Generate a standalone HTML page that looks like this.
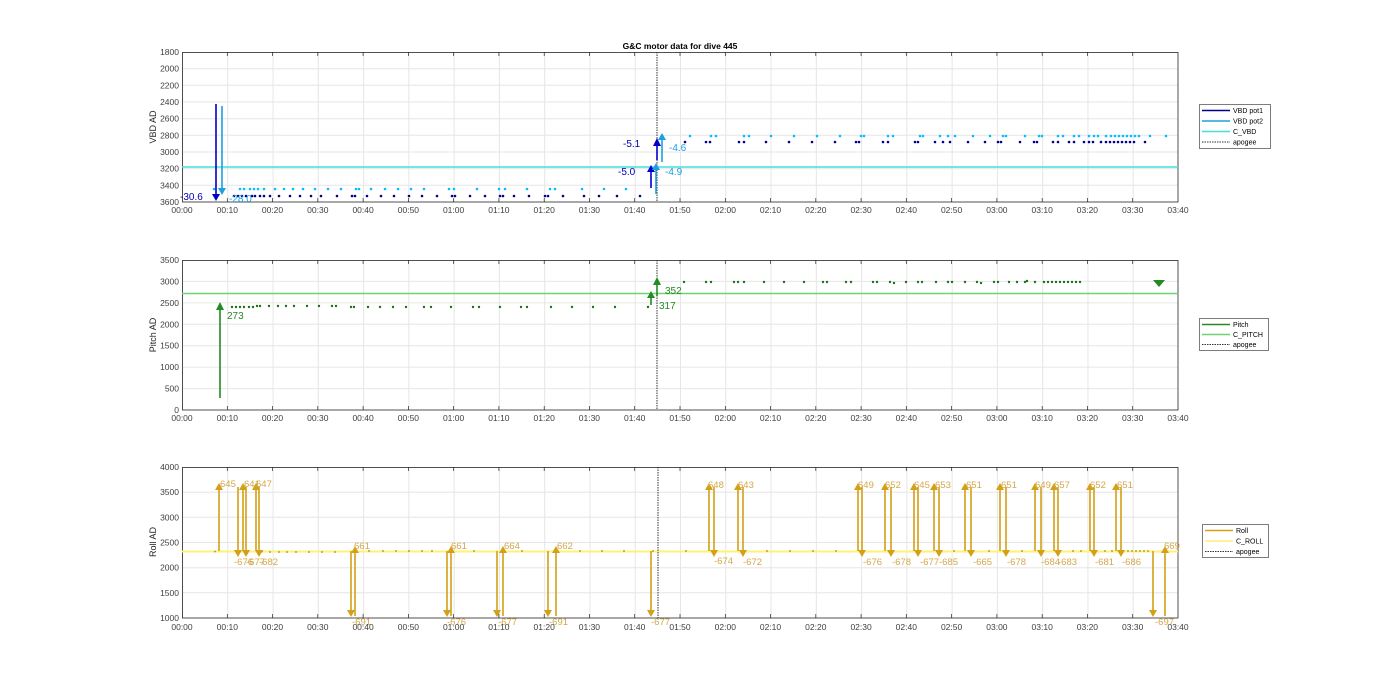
<!DOCTYPE html>
<html><head><meta charset="utf-8"><style>
html,body{margin:0;padding:0;background:#fff}
svg{display:block;font-family:"Liberation Sans",Arial,sans-serif}
.t{font-size:8.5px;fill:#404040}
</style></head><body>
<svg width="1400" height="693" viewBox="0 0 1400 693" xmlns="http://www.w3.org/2000/svg">
<defs>
<pattern id="gx" x="182" y="0" width="45.2727" height="693" patternUnits="userSpaceOnUse"><line x1="0.5" y1="0" x2="0.5" y2="693" stroke="#e6e6e6" stroke-width="1"/></pattern>
<marker id="ab" markerWidth="8" markerHeight="8" refX="4" refY="7" orient="auto"><path d="M0,0 L8,4 L0,8z" fill="#0000c0" transform="rotate(0)"/></marker>
</defs>

<!-- ============ PLOT 1 ============ -->
<rect x="182" y="52" width="996" height="150" fill="url(#gx)"/>
<g stroke="#e6e6e6"><line x1="182" x2="1178" y1="68.7" y2="68.7"/><line x1="182" x2="1178" y1="85.3" y2="85.3"/><line x1="182" x2="1178" y1="102" y2="102"/><line x1="182" x2="1178" y1="118.7" y2="118.7"/><line x1="182" x2="1178" y1="135.3" y2="135.3"/><line x1="182" x2="1178" y1="152" y2="152"/><line x1="182" x2="1178" y1="168.7" y2="168.7"/><line x1="182" x2="1178" y1="185.3" y2="185.3"/></g>
<rect x="182.5" y="52.5" width="995.5" height="149.5" fill="none" stroke="#262626" stroke-width="0.8"/>
<text x="680" y="49" text-anchor="middle" font-size="8.5" font-weight="bold" fill="#000">G&amp;C motor data for dive 445</text>
<g class="t" text-anchor="end"><text x="179" y="55">1800</text><text x="179" y="71.7">2000</text><text x="179" y="88.3">2200</text><text x="179" y="105">2400</text><text x="179" y="121.7">2600</text><text x="179" y="138.3">2800</text><text x="179" y="155">3000</text><text x="179" y="171.7">3200</text><text x="179" y="188.3">3400</text><text x="179" y="205">3600</text></g>
<text transform="translate(156,127) rotate(-90)" text-anchor="middle" font-size="9" fill="#262626">VBD AD</text>
<line x1="182" x2="1178" y1="167" y2="167" stroke="#40e0e0" stroke-width="1.6"/>
<line x1="657" x2="657" y1="52" y2="202" stroke="#333" stroke-dasharray="1.5,1" stroke-width="1"/>
<g fill="#00bfff">
<circle cx="214" cy="189" r="1.3"/><circle cx="240" cy="189" r="1.3"/><circle cx="244" cy="189" r="1.3"/><circle cx="250" cy="189" r="1.3"/><circle cx="254" cy="189" r="1.3"/><circle cx="258" cy="189" r="1.3"/><circle cx="264" cy="189" r="1.3"/><circle cx="275" cy="189" r="1.3"/><circle cx="284" cy="189" r="1.3"/><circle cx="293" cy="189" r="1.3"/><circle cx="303" cy="189" r="1.3"/><circle cx="315" cy="189" r="1.3"/><circle cx="328" cy="189" r="1.3"/><circle cx="341" cy="189" r="1.3"/><circle cx="356" cy="189" r="1.3"/><circle cx="359" cy="189" r="1.3"/><circle cx="371" cy="189" r="1.3"/><circle cx="385" cy="189" r="1.3"/><circle cx="398" cy="189" r="1.3"/><circle cx="411" cy="189" r="1.3"/><circle cx="424" cy="189" r="1.3"/><circle cx="449" cy="189" r="1.3"/><circle cx="454" cy="189" r="1.3"/><circle cx="477" cy="189" r="1.3"/><circle cx="499" cy="189" r="1.3"/><circle cx="505" cy="189" r="1.3"/><circle cx="527" cy="189" r="1.3"/><circle cx="550" cy="189" r="1.3"/><circle cx="555" cy="189" r="1.3"/><circle cx="582" cy="189" r="1.3"/><circle cx="604" cy="189" r="1.3"/><circle cx="626" cy="189" r="1.3"/>
<circle cx="690" cy="136" r="1.3"/><circle cx="711" cy="136" r="1.3"/><circle cx="716" cy="136" r="1.3"/><circle cx="744" cy="136" r="1.3"/><circle cx="749" cy="136" r="1.3"/><circle cx="771" cy="136" r="1.3"/><circle cx="794" cy="136" r="1.3"/><circle cx="817" cy="136" r="1.3"/><circle cx="840" cy="136" r="1.3"/><circle cx="861" cy="136" r="1.3"/><circle cx="864" cy="136" r="1.3"/><circle cx="888" cy="136" r="1.3"/><circle cx="893" cy="136" r="1.3"/><circle cx="920" cy="136" r="1.3"/><circle cx="923" cy="136" r="1.3"/><circle cx="940" cy="136" r="1.3"/><circle cx="948" cy="136" r="1.3"/><circle cx="955" cy="136" r="1.3"/><circle cx="973" cy="136" r="1.3"/><circle cx="990" cy="136" r="1.3"/><circle cx="1003" cy="136" r="1.3"/><circle cx="1006" cy="136" r="1.3"/><circle cx="1025" cy="136" r="1.3"/><circle cx="1039" cy="136" r="1.3"/><circle cx="1042" cy="136" r="1.3"/><circle cx="1058" cy="136" r="1.3"/><circle cx="1063" cy="136" r="1.3"/><circle cx="1074" cy="136" r="1.3"/><circle cx="1079" cy="136" r="1.3"/><circle cx="1089" cy="136" r="1.3"/><circle cx="1094" cy="136" r="1.3"/><circle cx="1098" cy="136" r="1.3"/><circle cx="1106" cy="136" r="1.3"/><circle cx="1111" cy="136" r="1.3"/><circle cx="1115" cy="136" r="1.3"/><circle cx="1119" cy="136" r="1.3"/><circle cx="1123" cy="136" r="1.3"/><circle cx="1127" cy="136" r="1.3"/><circle cx="1131" cy="136" r="1.3"/><circle cx="1135" cy="136" r="1.3"/><circle cx="1139" cy="136" r="1.3"/><circle cx="1150" cy="136" r="1.3"/><circle cx="1166" cy="136" r="1.3"/>
</g>
<g fill="#00008b">
<circle cx="234" cy="196" r="1.3"/><circle cx="238" cy="196" r="1.3"/><circle cx="242" cy="196" r="1.3"/><circle cx="246" cy="196" r="1.3"/><circle cx="252" cy="196" r="1.3"/><circle cx="255" cy="196" r="1.3"/><circle cx="260" cy="196" r="1.3"/><circle cx="264" cy="196" r="1.3"/><circle cx="270" cy="196" r="1.3"/><circle cx="279" cy="196" r="1.3"/><circle cx="290" cy="196" r="1.3"/><circle cx="300" cy="196" r="1.3"/><circle cx="311" cy="196" r="1.3"/><circle cx="321" cy="196" r="1.3"/><circle cx="337" cy="196" r="1.3"/><circle cx="352" cy="196" r="1.3"/><circle cx="355" cy="196" r="1.3"/><circle cx="367" cy="196" r="1.3"/><circle cx="381" cy="196" r="1.3"/><circle cx="394" cy="196" r="1.3"/><circle cx="409" cy="196" r="1.3"/><circle cx="422" cy="196" r="1.3"/><circle cx="437" cy="196" r="1.3"/><circle cx="452" cy="196" r="1.3"/><circle cx="455" cy="196" r="1.3"/><circle cx="470" cy="196" r="1.3"/><circle cx="485" cy="196" r="1.3"/><circle cx="500" cy="196" r="1.3"/><circle cx="503" cy="196" r="1.3"/><circle cx="514" cy="196" r="1.3"/><circle cx="529" cy="196" r="1.3"/><circle cx="545" cy="196" r="1.3"/><circle cx="548" cy="196" r="1.3"/><circle cx="563" cy="196" r="1.3"/><circle cx="584" cy="196" r="1.3"/><circle cx="599" cy="196" r="1.3"/><circle cx="617" cy="196" r="1.3"/><circle cx="640" cy="196" r="1.3"/>
<circle cx="685" cy="142" r="1.3"/><circle cx="706" cy="142" r="1.3"/><circle cx="710" cy="142" r="1.3"/><circle cx="739" cy="142" r="1.3"/><circle cx="744" cy="142" r="1.3"/><circle cx="766" cy="142" r="1.3"/><circle cx="789" cy="142" r="1.3"/><circle cx="812" cy="142" r="1.3"/><circle cx="835" cy="142" r="1.3"/><circle cx="856" cy="142" r="1.3"/><circle cx="859" cy="142" r="1.3"/><circle cx="883" cy="142" r="1.3"/><circle cx="888" cy="142" r="1.3"/><circle cx="915" cy="142" r="1.3"/><circle cx="918" cy="142" r="1.3"/><circle cx="935" cy="142" r="1.3"/><circle cx="943" cy="142" r="1.3"/><circle cx="950" cy="142" r="1.3"/><circle cx="968" cy="142" r="1.3"/><circle cx="985" cy="142" r="1.3"/><circle cx="998" cy="142" r="1.3"/><circle cx="1001" cy="142" r="1.3"/><circle cx="1020" cy="142" r="1.3"/><circle cx="1034" cy="142" r="1.3"/><circle cx="1037" cy="142" r="1.3"/><circle cx="1053" cy="142" r="1.3"/><circle cx="1058" cy="142" r="1.3"/><circle cx="1069" cy="142" r="1.3"/><circle cx="1074" cy="142" r="1.3"/><circle cx="1084" cy="142" r="1.3"/><circle cx="1089" cy="142" r="1.3"/><circle cx="1093" cy="142" r="1.3"/><circle cx="1101" cy="142" r="1.3"/><circle cx="1106" cy="142" r="1.3"/><circle cx="1110" cy="142" r="1.3"/><circle cx="1114" cy="142" r="1.3"/><circle cx="1118" cy="142" r="1.3"/><circle cx="1122" cy="142" r="1.3"/><circle cx="1126" cy="142" r="1.3"/><circle cx="1130" cy="142" r="1.3"/><circle cx="1134" cy="142" r="1.3"/><circle cx="1145" cy="142" r="1.3"/>
</g>
<!-- VBD arrows -->
<line x1="216" y1="104" x2="216" y2="194" stroke="#0000c8" stroke-width="1.6"/><path d="M212,194 L220,194 L216,201z" fill="#0000c8"/>
<line x1="222" y1="106" x2="222" y2="188" stroke="#1ca0e0" stroke-width="1.6"/><path d="M218,188 L226,188 L222,195z" fill="#1ca0e0"/>
<line x1="651" y1="188" x2="651" y2="172" stroke="#0000c8" stroke-width="1.6"/><path d="M647,172 L655,172 L651,165z" fill="#0000c8"/>
<line x1="657" y1="160" x2="657" y2="146" stroke="#0000c8" stroke-width="1.6"/><path d="M653,146 L661,146 L657,138z" fill="#0000c8"/>
<line x1="656" y1="194" x2="656" y2="170" stroke="#1ca0e0" stroke-width="1.6"/><path d="M652,170 L660,170 L656,163z" fill="#1ca0e0"/>
<line x1="662" y1="162" x2="662" y2="140" stroke="#1ca0e0" stroke-width="1.6"/><path d="M658,140 L666,140 L662,133z" fill="#1ca0e0"/>
<g font-size="10"><text x="180" y="200" fill="#0000b0">-30.6</text><text x="229" y="202" fill="#1ca0e0">-28.0</text><text x="623" y="147" fill="#0000b0">-5.1</text><text x="618" y="175" fill="#0000b0">-5.0</text><text x="669" y="151" fill="#1ca0e0">-4.6</text><text x="665" y="175" fill="#1ca0e0">-4.9</text></g>
<!-- legend 1 -->
<rect x="1199.5" y="104.5" width="71" height="44" fill="#fff" stroke="#262626" stroke-width="0.6"/>
<g font-size="7" fill="#000"><line x1="1202" x2="1230" y1="110.5" y2="110.5" stroke="#00008b" stroke-width="1.6"/><text x="1233" y="113">VBD pot1</text>
<line x1="1202" x2="1230" y1="121" y2="121" stroke="#1ca0e0" stroke-width="1.6"/><text x="1233" y="123.5">VBD pot2</text>
<line x1="1202" x2="1230" y1="131.5" y2="131.5" stroke="#40e0e0" stroke-width="1.6"/><text x="1233" y="134">C_VBD</text>
<line x1="1202" x2="1230" y1="142" y2="142" stroke="#333" stroke-dasharray="1.5,1"/><text x="1233" y="144.5">apogee</text></g>

<!-- ============ PLOT 2 ============ -->
<rect x="182" y="260" width="996" height="150" fill="url(#gx)"/>
<g stroke="#e6e6e6"><line x1="182" x2="1178" y1="281.4" y2="281.4"/><line x1="182" x2="1178" y1="302.9" y2="302.9"/><line x1="182" x2="1178" y1="324.3" y2="324.3"/><line x1="182" x2="1178" y1="345.7" y2="345.7"/><line x1="182" x2="1178" y1="367.1" y2="367.1"/><line x1="182" x2="1178" y1="388.6" y2="388.6"/></g>
<rect x="182.5" y="260.5" width="995.5" height="149.5" fill="none" stroke="#262626" stroke-width="0.8"/>
<g class="t" text-anchor="end"><text x="179" y="263">3500</text><text x="179" y="284.4">3000</text><text x="179" y="305.9">2500</text><text x="179" y="327.3">2000</text><text x="179" y="348.7">1500</text><text x="179" y="370.1">1000</text><text x="179" y="391.6">500</text><text x="179" y="413">0</text></g>
<text transform="translate(156,335) rotate(-90)" text-anchor="middle" font-size="9" fill="#262626">Pitch AD</text>
<line x1="182" x2="1178" y1="293.5" y2="293.5" stroke="#6fd46f" stroke-width="1.6"/>
<line x1="657" x2="657" y1="260" y2="410" stroke="#333" stroke-dasharray="1.5,1" stroke-width="1"/>
<g fill="#1e6e1e">
<circle cx="232" cy="307" r="1.2"/><circle cx="236" cy="307" r="1.2"/><circle cx="240" cy="307" r="1.2"/><circle cx="244" cy="307" r="1.2"/><circle cx="249" cy="307" r="1.2"/><circle cx="253" cy="307" r="1.2"/><circle cx="257" cy="306" r="1.2"/><circle cx="260" cy="306" r="1.2"/><circle cx="269" cy="306" r="1.2"/><circle cx="278" cy="306" r="1.2"/><circle cx="286" cy="306" r="1.2"/><circle cx="294" cy="306" r="1.2"/><circle cx="307" cy="306" r="1.2"/><circle cx="319" cy="306" r="1.2"/><circle cx="332" cy="306" r="1.2"/><circle cx="336" cy="306" r="1.2"/><circle cx="351" cy="307" r="1.2"/><circle cx="354" cy="307" r="1.2"/><circle cx="368" cy="307" r="1.2"/><circle cx="380" cy="307" r="1.2"/><circle cx="393" cy="307" r="1.2"/><circle cx="406" cy="307" r="1.2"/><circle cx="424" cy="307" r="1.2"/><circle cx="431" cy="307" r="1.2"/><circle cx="451" cy="307" r="1.2"/><circle cx="473" cy="307" r="1.2"/><circle cx="479" cy="307" r="1.2"/><circle cx="500" cy="307" r="1.2"/><circle cx="521" cy="307" r="1.2"/><circle cx="527" cy="307" r="1.2"/><circle cx="551" cy="307" r="1.2"/><circle cx="572" cy="307" r="1.2"/><circle cx="593" cy="307" r="1.2"/><circle cx="615" cy="307" r="1.2"/><circle cx="648" cy="307" r="1.2"/>
<circle cx="684" cy="282" r="1.2"/><circle cx="706" cy="282" r="1.2"/><circle cx="711" cy="282" r="1.2"/><circle cx="734" cy="282" r="1.2"/><circle cx="738" cy="282" r="1.2"/><circle cx="744" cy="282" r="1.2"/><circle cx="764" cy="282" r="1.2"/><circle cx="784" cy="282" r="1.2"/><circle cx="804" cy="282" r="1.2"/><circle cx="823" cy="282" r="1.2"/><circle cx="827" cy="282" r="1.2"/><circle cx="846" cy="282" r="1.2"/><circle cx="851" cy="282" r="1.2"/><circle cx="873" cy="282" r="1.2"/><circle cx="877" cy="282" r="1.2"/><circle cx="890" cy="282" r="1.2"/><circle cx="894" cy="283" r="1.2"/><circle cx="906" cy="282" r="1.2"/><circle cx="918" cy="282" r="1.2"/><circle cx="922" cy="282" r="1.2"/><circle cx="936" cy="282" r="1.2"/><circle cx="948" cy="282" r="1.2"/><circle cx="952" cy="282" r="1.2"/><circle cx="965" cy="282" r="1.2"/><circle cx="977" cy="282" r="1.2"/><circle cx="981" cy="283" r="1.2"/><circle cx="994" cy="282" r="1.2"/><circle cx="998" cy="282" r="1.2"/><circle cx="1009" cy="282" r="1.2"/><circle cx="1017" cy="282" r="1.2"/><circle cx="1025" cy="282" r="1.2"/><circle cx="1027" cy="281" r="1.2"/><circle cx="1035" cy="282" r="1.2"/><circle cx="1044" cy="282" r="1.2"/><circle cx="1048" cy="282" r="1.2"/><circle cx="1052" cy="282" r="1.2"/><circle cx="1056" cy="282" r="1.2"/><circle cx="1060" cy="282" r="1.2"/><circle cx="1064" cy="282" r="1.2"/><circle cx="1068" cy="282" r="1.2"/><circle cx="1072" cy="282" r="1.2"/><circle cx="1076" cy="282" r="1.2"/><circle cx="1080" cy="282" r="1.2"/>
</g>
<line x1="220" y1="398" x2="220" y2="310" stroke="#228b22" stroke-width="1.6"/><path d="M216,310 L224,310 L220,302z" fill="#228b22"/>
<line x1="651" y1="305" x2="651" y2="298" stroke="#228b22" stroke-width="1.6"/><path d="M647,298 L655,298 L651,291z" fill="#228b22"/>
<line x1="657" y1="296" x2="657" y2="285" stroke="#228b22" stroke-width="1.6"/><path d="M653,285 L661,285 L657,277z" fill="#228b22"/>
<path d="M1153,280 L1165,280 L1159,287z" fill="#228b22"/>
<g font-size="10" fill="#228b22"><text x="227" y="319">273</text><text x="665" y="294">352</text><text x="659" y="309">317</text></g>
<rect x="1199.5" y="318.5" width="69" height="32" fill="#fff" stroke="#262626" stroke-width="0.6"/>
<g font-size="7" fill="#000"><line x1="1202" x2="1230" y1="324.5" y2="324.5" stroke="#228b22" stroke-width="1.6"/><text x="1233" y="327">Pitch</text>
<line x1="1202" x2="1230" y1="334.5" y2="334.5" stroke="#6fd46f" stroke-width="1.6"/><text x="1233" y="337">C_PITCH</text>
<line x1="1202" x2="1230" y1="344.5" y2="344.5" stroke="#333" stroke-dasharray="1.5,1"/><text x="1233" y="347">apogee</text></g>

<!-- ============ PLOT 3 ============ -->
<rect x="182" y="467" width="996" height="151" fill="url(#gx)"/>
<g stroke="#e6e6e6"><line x1="182" x2="1178" y1="492.2" y2="492.2"/><line x1="182" x2="1178" y1="517.3" y2="517.3"/><line x1="182" x2="1178" y1="542.5" y2="542.5"/><line x1="182" x2="1178" y1="567.7" y2="567.7"/><line x1="182" x2="1178" y1="592.8" y2="592.8"/></g>
<rect x="182.5" y="467.5" width="995.5" height="150.5" fill="none" stroke="#262626" stroke-width="0.8"/>
<g class="t" text-anchor="end"><text x="179" y="470">4000</text><text x="179" y="495.2">3500</text><text x="179" y="520.3">3000</text><text x="179" y="545.5">2500</text><text x="179" y="570.7">2000</text><text x="179" y="595.8">1500</text><text x="179" y="621">1000</text></g>
<text transform="translate(156,542) rotate(-90)" text-anchor="middle" font-size="9" fill="#262626">Roll AD</text>
<line x1="182" x2="1178" y1="551.5" y2="551.5" stroke="#fff176" stroke-width="2"/>
<line x1="658" x2="658" y1="467" y2="618" stroke="#333" stroke-dasharray="1.5,1" stroke-width="1"/>
<g fill="#b8a040"><circle cx="215" cy="551.5" r="1"/><circle cx="262" cy="551.5" r="1"/><circle cx="270" cy="552" r="1"/><circle cx="279" cy="552" r="1"/><circle cx="287" cy="552" r="1"/><circle cx="296" cy="552" r="1"/><circle cx="309" cy="552" r="1"/><circle cx="322" cy="552" r="1"/><circle cx="335" cy="552" r="1"/><circle cx="369" cy="551" r="1"/><circle cx="383" cy="551" r="1"/><circle cx="396" cy="551" r="1"/><circle cx="409" cy="551" r="1"/><circle cx="422" cy="551" r="1"/><circle cx="432" cy="551" r="1"/><circle cx="474" cy="551" r="1"/><circle cx="522" cy="551" r="1"/><circle cx="580" cy="551" r="1"/><circle cx="602" cy="551" r="1"/><circle cx="624" cy="551" r="1"/><circle cx="653" cy="551" r="1"/><circle cx="686" cy="551" r="1"/><circle cx="767" cy="551" r="1"/><circle cx="790" cy="551" r="1"/><circle cx="813" cy="551" r="1"/><circle cx="836" cy="551" r="1"/><circle cx="954" cy="551" r="1"/><circle cx="989" cy="551" r="1"/><circle cx="1022" cy="551" r="1"/><circle cx="1073" cy="551" r="1"/><circle cx="1081" cy="551" r="1"/><circle cx="1105" cy="551" r="1"/><circle cx="1112" cy="551" r="1"/><circle cx="1128" cy="551" r="1"/><circle cx="1132" cy="551" r="1"/><circle cx="1136" cy="551" r="1"/><circle cx="1140" cy="551" r="1"/><circle cx="1144" cy="551" r="1"/><circle cx="1148" cy="551" r="1"/><circle cx="1166" cy="551" r="1"/></g>
<g stroke="#d4a017" stroke-width="1.6" fill="none">
<!-- up arrows (551 -> 490) -->
<path d="M219,551V490M243,551V490M256,551V490M709,551V490M738,551V490M858,551V490M885,551V490M914,551V490M934,551V490M965,551V490M1000,551V490M1035,551V490M1054,551V490M1090,551V490M1116,551V490"/>
<!-- down arrows (487 -> 550) -->
<path d="M238,487V550M246,487V550M259,487V550M714,487V550M743,487V550M862,487V550M891,487V550M918,487V550M939,487V550M971,487V550M1006,487V550M1041,487V550M1058,487V550M1094,487V550M1121,487V550"/>
<!-- long down -->
<path d="M351,551V610M447,551V610M497,551V610M548,551V610M651,551V610M1153,551V610"/>
<!-- long up -->
<path d="M355,616V553M451,616V553M503,616V553M556,616V553M1165,616V553"/>
</g>
<g fill="#d4a017">
<path d="M215,490h8l-4,-7zM239,490h8l-4,-7zM252,490h8l-4,-7zM705,490h8l-4,-7zM734,490h8l-4,-7zM854,490h8l-4,-7zM881,490h8l-4,-7zM910,490h8l-4,-7zM930,490h8l-4,-7zM961,490h8l-4,-7zM996,490h8l-4,-7zM1031,490h8l-4,-7zM1050,490h8l-4,-7zM1086,490h8l-4,-7zM1112,490h8l-4,-7z"/>
<path d="M234,550h8l-4,7zM242,550h8l-4,7zM255,550h8l-4,7zM710,550h8l-4,7zM739,550h8l-4,7zM858,550h8l-4,7zM887,550h8l-4,7zM914,550h8l-4,7zM935,550h8l-4,7zM967,550h8l-4,7zM1002,550h8l-4,7zM1037,550h8l-4,7zM1054,550h8l-4,7zM1090,550h8l-4,7zM1117,550h8l-4,7z"/>
<path d="M347,610h8l-4,7zM443,610h8l-4,7zM493,610h8l-4,7zM544,610h8l-4,7zM647,610h8l-4,7zM1149,610h8l-4,7z"/>
<path d="M351,553h8l-4,-7zM447,553h8l-4,-7zM499,553h8l-4,-7zM552,553h8l-4,-7zM1161,553h8l-4,-7z"/>
</g>
<g font-size="9.5" fill="#d4a84a">
<text x="220" y="487">645</text><text x="244" y="487">641</text><text x="256" y="487">647</text>
<text x="234" y="565">-676</text><text x="246" y="565">-677</text><text x="259" y="565">-682</text>
<text x="354" y="549">661</text><text x="451" y="549">661</text><text x="504" y="549">664</text><text x="557" y="549">662</text>
<text x="352" y="625">-691</text><text x="447" y="625">-676</text><text x="498" y="625">-677</text><text x="549" y="625">-691</text><text x="651" y="625">-677</text>
<text x="708" y="488">648</text><text x="738" y="488">643</text><text x="858" y="488">649</text><text x="885" y="488">652</text><text x="914" y="488">645</text><text x="935" y="488">653</text><text x="966" y="488">651</text><text x="1001" y="488">651</text><text x="1035" y="488">649</text><text x="1054" y="488">657</text><text x="1090" y="488">652</text><text x="1117" y="488">651</text><text x="1164" y="549">669</text>
<text x="714" y="564">-674</text><text x="743" y="565">-672</text><text x="863" y="565">-676</text><text x="892" y="565">-678</text><text x="920" y="565">-677</text><text x="939" y="565">-685</text><text x="973" y="565">-665</text><text x="1007" y="565">-678</text><text x="1041" y="565">-684</text><text x="1058" y="565">-683</text><text x="1095" y="565">-681</text><text x="1122" y="565">-686</text><text x="1155" y="625">-697</text>
</g>
<rect x="1202.5" y="524.5" width="66" height="33" fill="#fff" stroke="#262626" stroke-width="0.6"/>
<g font-size="7" fill="#000"><line x1="1205" x2="1233" y1="530.5" y2="530.5" stroke="#d4a017" stroke-width="1.6"/><text x="1236" y="533">Roll</text>
<line x1="1205" x2="1233" y1="541" y2="541" stroke="#fff176" stroke-width="1.6"/><text x="1236" y="543.5">C_ROLL</text>
<line x1="1205" x2="1233" y1="551.5" y2="551.5" stroke="#333" stroke-dasharray="1.5,1"/><text x="1236" y="554">apogee</text></g>

<!-- x tick marks -->
<g stroke="#262626" stroke-width="0.7">
<path d="M227.3,52v4M272.5,52v4M317.8,52v4M363.1,52v4M408.4,52v4M453.6,52v4M498.9,52v4M544.2,52v4M589.4,52v4M634.7,52v4M680,52v4M725.3,52v4M770.5,52v4M815.8,52v4M861.1,52v4M906.3,52v4M951.6,52v4M996.9,52v4M1042.2,52v4M1087.4,52v4M1132.7,52v4"/>
<path d="M227.3,202v-4M272.5,202v-4M317.8,202v-4M363.1,202v-4M408.4,202v-4M453.6,202v-4M498.9,202v-4M544.2,202v-4M589.4,202v-4M634.7,202v-4M680,202v-4M725.3,202v-4M770.5,202v-4M815.8,202v-4M861.1,202v-4M906.3,202v-4M951.6,202v-4M996.9,202v-4M1042.2,202v-4M1087.4,202v-4M1132.7,202v-4"/>
<path d="M227.3,260v4M272.5,260v4M317.8,260v4M363.1,260v4M408.4,260v4M453.6,260v4M498.9,260v4M544.2,260v4M589.4,260v4M634.7,260v4M680,260v4M725.3,260v4M770.5,260v4M815.8,260v4M861.1,260v4M906.3,260v4M951.6,260v4M996.9,260v4M1042.2,260v4M1087.4,260v4M1132.7,260v4"/>
<path d="M227.3,410v-4M272.5,410v-4M317.8,410v-4M363.1,410v-4M408.4,410v-4M453.6,410v-4M498.9,410v-4M544.2,410v-4M589.4,410v-4M634.7,410v-4M680,410v-4M725.3,410v-4M770.5,410v-4M815.8,410v-4M861.1,410v-4M906.3,410v-4M951.6,410v-4M996.9,410v-4M1042.2,410v-4M1087.4,410v-4M1132.7,410v-4"/>
<path d="M227.3,467v4M272.5,467v4M317.8,467v4M363.1,467v4M408.4,467v4M453.6,467v4M498.9,467v4M544.2,467v4M589.4,467v4M634.7,467v4M680,467v4M725.3,467v4M770.5,467v4M815.8,467v4M861.1,467v4M906.3,467v4M951.6,467v4M996.9,467v4M1042.2,467v4M1087.4,467v4M1132.7,467v4"/>
<path d="M227.3,618v-4M272.5,618v-4M317.8,618v-4M363.1,618v-4M408.4,618v-4M453.6,618v-4M498.9,618v-4M544.2,618v-4M589.4,618v-4M634.7,618v-4M680,618v-4M725.3,618v-4M770.5,618v-4M815.8,618v-4M861.1,618v-4M906.3,618v-4M951.6,618v-4M996.9,618v-4M1042.2,618v-4M1087.4,618v-4M1132.7,618v-4"/>
</g>

<!-- x tick labels -->
<g class="t" text-anchor="middle">
<text x="182" y="213">00:00</text><text x="227.3" y="213">00:10</text><text x="272.5" y="213">00:20</text><text x="317.8" y="213">00:30</text><text x="363.1" y="213">00:40</text><text x="408.4" y="213">00:50</text><text x="453.6" y="213">01:00</text><text x="498.9" y="213">01:10</text><text x="544.2" y="213">01:20</text><text x="589.4" y="213">01:30</text><text x="634.7" y="213">01:40</text><text x="680" y="213">01:50</text><text x="725.3" y="213">02:00</text><text x="770.5" y="213">02:10</text><text x="815.8" y="213">02:20</text><text x="861.1" y="213">02:30</text><text x="906.3" y="213">02:40</text><text x="951.6" y="213">02:50</text><text x="996.9" y="213">03:00</text><text x="1042.2" y="213">03:10</text><text x="1087.4" y="213">03:20</text><text x="1132.7" y="213">03:30</text><text x="1178" y="213">03:40</text>
</g>
<g class="t" text-anchor="middle">
<text x="182" y="421">00:00</text><text x="227.3" y="421">00:10</text><text x="272.5" y="421">00:20</text><text x="317.8" y="421">00:30</text><text x="363.1" y="421">00:40</text><text x="408.4" y="421">00:50</text><text x="453.6" y="421">01:00</text><text x="498.9" y="421">01:10</text><text x="544.2" y="421">01:20</text><text x="589.4" y="421">01:30</text><text x="634.7" y="421">01:40</text><text x="680" y="421">01:50</text><text x="725.3" y="421">02:00</text><text x="770.5" y="421">02:10</text><text x="815.8" y="421">02:20</text><text x="861.1" y="421">02:30</text><text x="906.3" y="421">02:40</text><text x="951.6" y="421">02:50</text><text x="996.9" y="421">03:00</text><text x="1042.2" y="421">03:10</text><text x="1087.4" y="421">03:20</text><text x="1132.7" y="421">03:30</text><text x="1178" y="421">03:40</text>
</g>
<g class="t" text-anchor="middle">
<text x="182" y="630">00:00</text><text x="227.3" y="630">00:10</text><text x="272.5" y="630">00:20</text><text x="317.8" y="630">00:30</text><text x="363.1" y="630">00:40</text><text x="408.4" y="630">00:50</text><text x="453.6" y="630">01:00</text><text x="498.9" y="630">01:10</text><text x="544.2" y="630">01:20</text><text x="589.4" y="630">01:30</text><text x="634.7" y="630">01:40</text><text x="680" y="630">01:50</text><text x="725.3" y="630">02:00</text><text x="770.5" y="630">02:10</text><text x="815.8" y="630">02:20</text><text x="861.1" y="630">02:30</text><text x="906.3" y="630">02:40</text><text x="951.6" y="630">02:50</text><text x="996.9" y="630">03:00</text><text x="1042.2" y="630">03:10</text><text x="1087.4" y="630">03:20</text><text x="1132.7" y="630">03:30</text><text x="1178" y="630">03:40</text>
</g>
</svg>
</body></html>
